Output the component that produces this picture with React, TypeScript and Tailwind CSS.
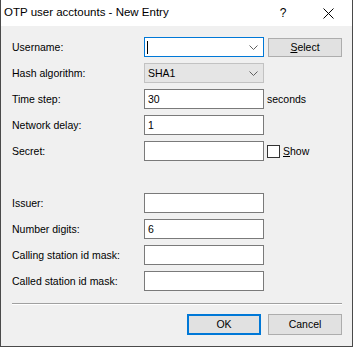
import React from "react";

const font = { fontFamily: '"Liberation Sans", Arial, sans-serif' };

function Chevron() {
  return (
    <svg width="9" height="5" viewBox="0 0 9 5" className="shrink-0">
      <path d="M0.5 0.5 L4.5 4.5 L8.5 0.5" fill="none" stroke="#606060" strokeWidth="1" />
    </svg>
  );
}

function TextBox({ value }: { value?: string }) {
  return (
    <div className="w-[120px] h-[20px] bg-white border border-[#7a7a7a] flex items-center pl-[3px] text-black">
      {value}
    </div>
  );
}

function Row({ label, children }: { label: string; children?: React.ReactNode }) {
  return (
    <div className="flex items-center h-[20px]">
      <div className="w-[132px] shrink-0 text-black">{label}</div>
      {children}
    </div>
  );
}

export default function App() {
  return (
    <div
      className="w-[353px] h-[347px] bg-[#f0f0f0] border-x border-b border-[#4a4a4a] flex flex-col text-[10.5px] leading-none select-none"
      style={font}
    >
      <div className="h-[26px] bg-white flex items-center shrink-0">
        <div className="pl-[3px] text-[11.5px] text-black flex-1">OTP user acctounts - New Entry</div>
        <div className="w-[20px] text-center text-[12px] text-black mr-[30px]">?</div>
        <svg width="11" height="11" viewBox="0 0 11 11" className="mr-[18px]">
          <path d="M0.5 0.5 L10.5 10.5 M10.5 0.5 L0.5 10.5" stroke="#000" strokeWidth="1" />
        </svg>
      </div>
      <div className="flex flex-col pl-[11px] pt-[11px] gap-[6px]">
        <Row label="Username:">
          <div className="w-[120px] h-[20px] bg-white border border-[#0078d7] flex items-center pl-[2px] pr-[5px] justify-between">
            <span className="w-px h-[13px] bg-black" />
            <Chevron />
          </div>
          <button className="ml-[4px] w-[74px] h-[19px] bg-[#e1e1e1] border border-[#adadad] text-black text-[10.5px] flex items-center justify-center">
            <span>
              <span className="underline">S</span>elect
            </span>
          </button>
        </Row>
        <Row label="Hash algorithm:">
          <div className="w-[120px] h-[20px] bg-[#e5e5e5] border border-[#c2c2c2] flex items-center pl-[3px] pr-[5px] justify-between text-black">
            <span>SHA1</span>
            <Chevron />
          </div>
        </Row>
        <Row label="Time step:">
          <TextBox value="30" />
          <span className="ml-[3px] text-black">seconds</span>
        </Row>
        <Row label="Network delay:">
          <TextBox value="1" />
        </Row>
        <Row label="Secret:">
          <TextBox />
          <div className="ml-[3px] w-[13px] h-[13px] bg-white border border-[#333]" />
          <span className="ml-[3px] text-black">
            <span className="underline">S</span>how
          </span>
        </Row>
        <div className="h-[20px]" />
        <Row label="Issuer:">
          <TextBox />
        </Row>
        <Row label="Number digits:">
          <TextBox value="6" />
        </Row>
        <Row label="Calling station id mask:">
          <TextBox />
        </Row>
        <Row label="Called station id mask:">
          <TextBox />
        </Row>
      </div>
      <div className="ml-[11px] w-[330px] mt-[12px] h-[2px] border-t border-[#a0a0a0] border-b border-b-white" />
      <div className="flex justify-end pr-[10px] mt-[9px] gap-[7px]">
        <button className="w-[74px] h-[21px] bg-[#e1e1e1] border-2 border-[#0078d7] text-black text-[10.5px] flex items-center justify-center">
          OK
        </button>
        <button className="w-[74px] h-[21px] bg-[#e1e1e1] border border-[#adadad] text-black text-[10.5px] flex items-center justify-center">
          Cancel
        </button>
      </div>
    </div>
  );
}
